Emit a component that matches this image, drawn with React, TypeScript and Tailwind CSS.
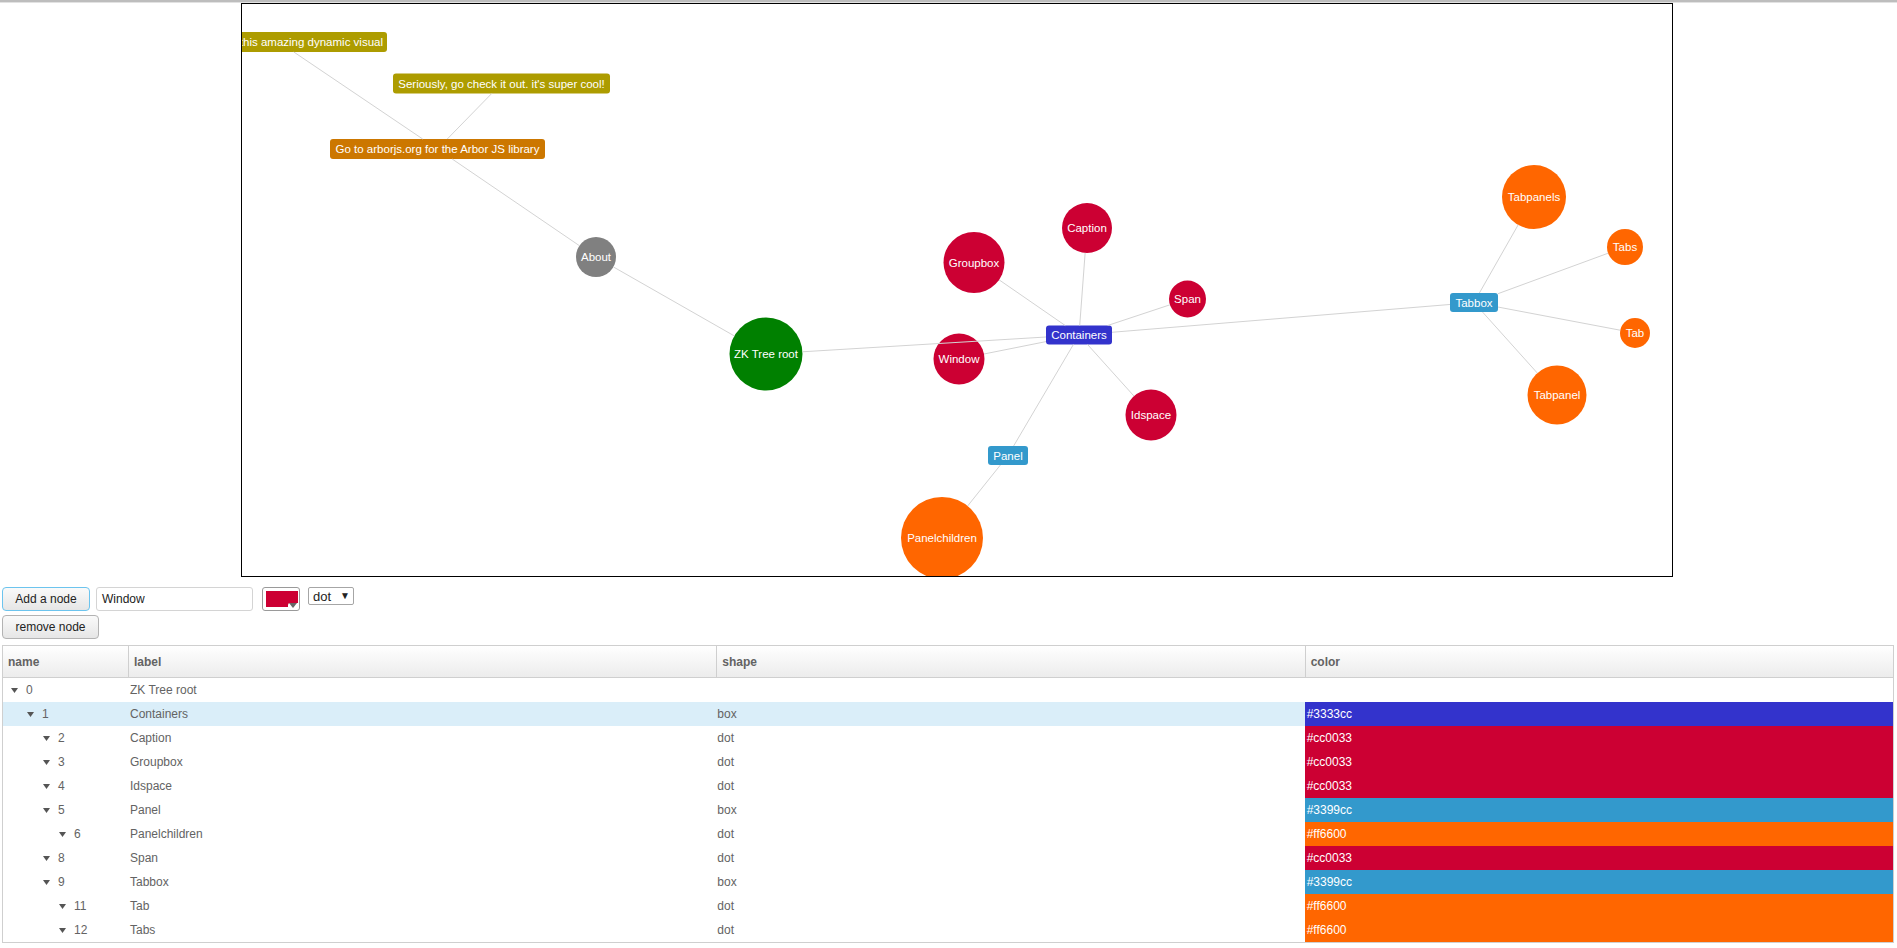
import React from "react";

type GNode = {
  id: string;
  label: string;
  x: number;
  y: number;
  color: string;
  r?: number;
  w?: number;
  h?: number;
  anchor?: "end";
};

// page coordinates, canvas inner origin sits at (242, 4)
const nodes: GNode[] = [
  { id: "amazing", label: "Check out this amazing dynamic visual", x: 279, y: 42, w: 216, h: 20, color: "#ad9c00", anchor: "end" },
  { id: "seriously", label: "Seriously, go check it out. it's super cool!", x: 501.5, y: 83.5, w: 217, h: 20, color: "#ad9c00" },
  { id: "goto", label: "Go to arborjs.org for the Arbor JS library", x: 437.5, y: 149, w: 215, h: 20, color: "#cc7700" },
  { id: "about", label: "About", x: 596, y: 257, r: 20, color: "#808080" },
  { id: "root", label: "ZK Tree root", x: 766, y: 354, r: 36.5, color: "#008000" },
  { id: "containers", label: "Containers", x: 1079, y: 335, w: 66, h: 19, color: "#3333cc" },
  { id: "groupbox", label: "Groupbox", x: 974, y: 262.5, r: 30.5, color: "#cc0033" },
  { id: "caption", label: "Caption", x: 1087, y: 228, r: 25, color: "#cc0033" },
  { id: "span", label: "Span", x: 1187.5, y: 299, r: 18.5, color: "#cc0033" },
  { id: "window", label: "Window", x: 959, y: 359, r: 25.5, color: "#cc0033" },
  { id: "idspace", label: "Idspace", x: 1151, y: 415, r: 25.5, color: "#cc0033" },
  { id: "panel", label: "Panel", x: 1008, y: 455.5, w: 40, h: 19, color: "#3399cc" },
  { id: "panelchildren", label: "Panelchildren", x: 942, y: 538, r: 41, color: "#ff6600" },
  { id: "tabbox", label: "Tabbox", x: 1474, y: 302.5, w: 48, h: 19, color: "#3399cc" },
  { id: "tabpanels", label: "Tabpanels", x: 1534, y: 197, r: 32, color: "#ff6600" },
  { id: "tabs", label: "Tabs", x: 1625, y: 247, r: 18, color: "#ff6600" },
  { id: "tab", label: "Tab", x: 1635, y: 333, r: 15, color: "#ff6600" },
  { id: "tabpanel", label: "Tabpanel", x: 1557, y: 395, r: 29.5, color: "#ff6600" },
];

const edges: [string, string][] = [
  ["amazing", "goto"],
  ["seriously", "goto"],
  ["goto", "about"],
  ["about", "root"],
  ["root", "containers"],
  ["containers", "groupbox"],
  ["containers", "caption"],
  ["containers", "span"],
  ["containers", "window"],
  ["containers", "idspace"],
  ["containers", "panel"],
  ["containers", "tabbox"],
  ["panel", "panelchildren"],
  ["tabbox", "tabpanels"],
  ["tabbox", "tabs"],
  ["tabbox", "tab"],
  ["tabbox", "tabpanel"],
];

const byId = Object.fromEntries(nodes.map((n) => [n.id, n]));

function clip(n: GNode, tx: number, ty: number) {
  const dx = tx - n.x;
  const dy = ty - n.y;
  const len = Math.hypot(dx, dy);
  if (n.r) return [n.x + (dx / len) * n.r, n.y + (dy / len) * n.r];
  const t = Math.min((n.w! / 2) / Math.abs(dx || 1e-9), (n.h! / 2) / Math.abs(dy || 1e-9));
  return [n.x + dx * t, n.y + dy * t];
}

function Graph() {
  return (
    <svg width="1430" height="572" className="absolute left-0 top-0">
      <g transform="translate(-242,-4)" fontFamily="'Liberation Sans', Arial, sans-serif" fontSize="11.5">
        {nodes.map((n) =>
          n.r ? (
            <g key={n.id}>
              <circle cx={n.x} cy={n.y} r={n.r} fill={n.color} />
              <text x={n.x} y={n.y} fill="#fff" textAnchor="middle" dominantBaseline="central">
                {n.label}
              </text>
            </g>
          ) : (
            <g key={n.id}>
              <rect x={n.x - n.w! / 2} y={n.y - n.h! / 2} width={n.w} height={n.h} rx={3} fill={n.color} />
              <text
                x={n.anchor === "end" ? n.x + n.w! / 2 - 4 : n.x}
                y={n.y}
                fill="#fff"
                textAnchor={n.anchor === "end" ? "end" : "middle"}
                dominantBaseline="central"
              >
                {n.label}
              </text>
            </g>
          )
        )}
        {edges.map(([a, b]) => {
          const na = byId[a];
          const nb = byId[b];
          const [x1, y1] = clip(na, nb.x, nb.y);
          const [x2, y2] = clip(nb, na.x, na.y);
          return <line key={a + b} x1={x1} y1={y1} x2={x2} y2={y2} stroke="#d3d3d3" strokeWidth={1} />;
        })}
      </g>
    </svg>
  );
}

type Row = { name: string; label: string; shape: string; color: string; depth: number; selected?: boolean };

const rows: Row[] = [
  { name: "0", label: "ZK Tree root", shape: "", color: "", depth: 0 },
  { name: "1", label: "Containers", shape: "box", color: "#3333cc", depth: 1, selected: true },
  { name: "2", label: "Caption", shape: "dot", color: "#cc0033", depth: 2 },
  { name: "3", label: "Groupbox", shape: "dot", color: "#cc0033", depth: 2 },
  { name: "4", label: "Idspace", shape: "dot", color: "#cc0033", depth: 2 },
  { name: "5", label: "Panel", shape: "box", color: "#3399cc", depth: 2 },
  { name: "6", label: "Panelchildren", shape: "dot", color: "#ff6600", depth: 3 },
  { name: "8", label: "Span", shape: "dot", color: "#cc0033", depth: 2 },
  { name: "9", label: "Tabbox", shape: "box", color: "#3399cc", depth: 2 },
  { name: "11", label: "Tab", shape: "dot", color: "#ff6600", depth: 3 },
  { name: "12", label: "Tabs", shape: "dot", color: "#ff6600", depth: 3 },
];

const indent: Record<number, string> = { 0: "pl-[3px]", 1: "pl-[19px]", 2: "pl-[35px]", 3: "pl-[51px]" };
const swatch: Record<string, string> = {
  "#3333cc": "bg-[#3333cc]",
  "#cc0033": "bg-[#cc0033]",
  "#3399cc": "bg-[#3399cc]",
  "#ff6600": "bg-[#ff6600]",
};

function TreeGrid() {
  return (
    <div className="mt-[6px] w-[1892px] border border-[#cfcfcf] text-[12px] text-[#636363]">
      <div className="grid h-[32px] grid-cols-[125px_1fr_1fr_1fr] border-b border-[#cfcfcf] bg-linear-to-b from-[#ffffff] to-[#ececec] font-bold">
        <div className="flex items-center pl-[5px]">name</div>
        <div className="flex items-center border-l border-[#cfcfcf] pl-[5px]">label</div>
        <div className="flex items-center border-l border-[#cfcfcf] pl-[5px]">shape</div>
        <div className="flex items-center border-l border-[#cfcfcf] pl-[5px]">color</div>
      </div>
      {rows.map((r) => (
        <div
          key={r.name}
          className={`grid h-[24px] grid-cols-[125px_1fr_1fr_1fr] ${r.selected ? "bg-[#daeef9]" : "bg-white"}`}
        >
          <div className={`flex items-center ${indent[r.depth]}`}>
            <span className="flex w-[16px] justify-center">
              <svg width="7" height="5" viewBox="0 0 7 5">
                <path d="M0 0h7L3.5 5z" fill="#555" />
              </svg>
            </span>
            <span className="ml-[4px]">{r.name}</span>
          </div>
          <div className="flex items-center pl-[2px]">{r.label}</div>
          <div className="flex items-center pl-[1px]">{r.shape}</div>
          <div className={`flex items-center pl-[2px] text-white ${r.color ? swatch[r.color] : ""}`}>{r.color}</div>
        </div>
      ))}
    </div>
  );
}

export default function App() {
  return (
    <div className="min-h-screen bg-white font-['Liberation_Sans',Arial,sans-serif]">
      <div className="h-[3px] border-t-2 border-[#bdbdbd] bg-[#e2e2e2]" />
      <div className="relative ml-[241px] h-[574px] w-[1432px] overflow-hidden border border-black bg-white">
        <Graph />
      </div>

      <div className="pl-[2px]">
        <div className="mt-[10px] flex items-start">
          <button className="h-[24px] w-[88px] rounded-[4px] border border-[#6cc4ee] bg-linear-to-b from-[#fafafa] to-[#e6e6e6] text-[12px] text-[#222]">
            Add a node
          </button>
          <div className="ml-[6px] flex h-[24px] w-[157px] items-center rounded-[3px] border border-[#d4d4d4] pl-[5px] text-[12px] text-[#222]">
            Window
          </div>
          <div className="relative ml-[9px] h-[24px] w-[38px] rounded-[3px] border border-[#9a9a9a] bg-white p-[3px]">
            <div className="h-[16px] w-[32px] bg-[#cc0033]" />
            <div className="absolute bottom-[1px] right-[1px] flex h-[6px] w-[10px] items-start justify-center rounded-tl-[2px] bg-white">
              <svg width="8" height="5" viewBox="0 0 8 5">
                <path d="M0 0h8L4 5z" fill="#666" />
              </svg>
            </div>
          </div>
          <div className="ml-[8px] flex h-[18px] w-[46px] items-center rounded-[2px] border border-[#a6a6a6] pl-[4px] text-[13px] leading-none text-[#222]">
            dot
            <span className="ml-[9px] text-[10px]">▼</span>
          </div>
        </div>
        <button className="mt-[4px] h-[24px] w-[97px] rounded-[4px] border border-[#b3b3b3] bg-linear-to-b from-[#fafafa] to-[#e6e6e6] text-[12px] text-[#222]">
          remove node
        </button>
        <TreeGrid />
      </div>
    </div>
  );
}
